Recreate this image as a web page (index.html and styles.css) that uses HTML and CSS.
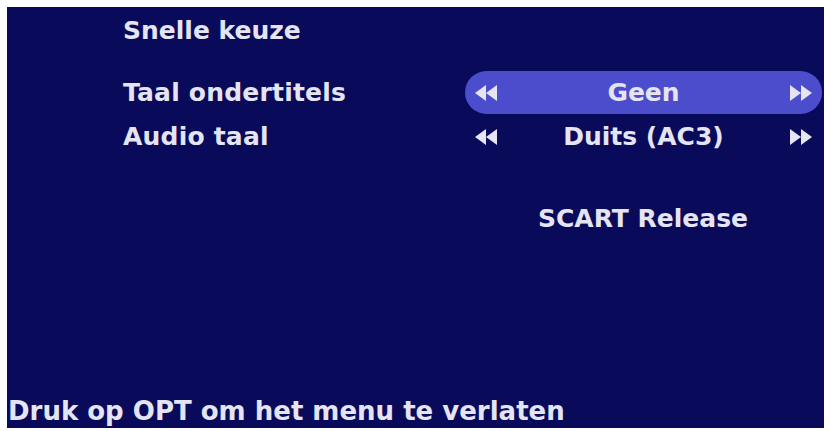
FILE: index.html
```html
<!DOCTYPE html>
<html lang="nl">
<head>
    <meta charset="UTF-8">
    <title>Snelle keuze</title>
    <link rel="stylesheet" href="styles.css">
</head>
<body>

    <div class="screen">
        <div class="title">Snelle keuze</div>

        <div class="options">
            <div class="label">Taal ondertitels</div>
            <div class="value selected">
                <svg class="arrow" viewBox="0 0 22 16"><path d="M11 0 L0 8 L11 16 Z M22 0 L11 8 L22 16 Z"/></svg>
                <span>Geen</span>
                <svg class="arrow" viewBox="0 0 22 16"><path d="M0 0 L11 8 L0 16 Z M11 0 L22 8 L11 16 Z"/></svg>
            </div>

            <div class="label">Audio taal</div>
            <div class="value">
                <svg class="arrow" viewBox="0 0 22 16"><path d="M11 0 L0 8 L11 16 Z M22 0 L11 8 L22 16 Z"/></svg>
                <span>Duits (AC3)</span>
                <svg class="arrow" viewBox="0 0 22 16"><path d="M0 0 L11 8 L0 16 Z M11 0 L22 8 L11 16 Z"/></svg>
            </div>
        </div>

        <div class="scart">SCART Release</div>

        <div class="footer">Druk op OPT om het menu te verlaten</div>
    </div>

</body>
</html>
```

FILE: styles.css
```css
body {
    margin: 0;
    background-color: #fff;
    font-family: "DejaVu Sans", sans-serif;
    font-weight: bold;
    color: #e4e4f2;
}
.screen {
    display: flex;
    flex-direction: column;
    margin: 7px 0 0 7px;
    width: 817px;
    height: 421px;
    background-color: #0a0a5a;
    font-size: 25px;
}
.title {
    padding: 9px 0 0 116px;
    line-height: 29px;
}
.options {
    display: grid;
    grid-template-columns: 342px 357px;
    grid-auto-rows: 43px;
    row-gap: 1px;
    margin-top: 26px;
    padding-left: 116px;
}
.label {
    display: flex;
    align-items: center;
    letter-spacing: 0.2px;
}
.value {
    display: flex;
    align-items: center;
    justify-content: space-between;
    padding: 0 10px;
    border-radius: 22px;
}
.value span {
    flex: 1;
    text-align: center;
}
.value.selected {
    background-color: #4b4dcc;
}
.arrow {
    width: 22px;
    height: 16px;
    fill: #e4e4f2;
}
.scart {
    margin-top: 46px;
    padding-left: 531px;
    line-height: 29px;
}
.footer {
    margin-top: auto;
    padding: 0 0 2px 1px;
    font-size: 26px;
    line-height: 30px;
}
```
